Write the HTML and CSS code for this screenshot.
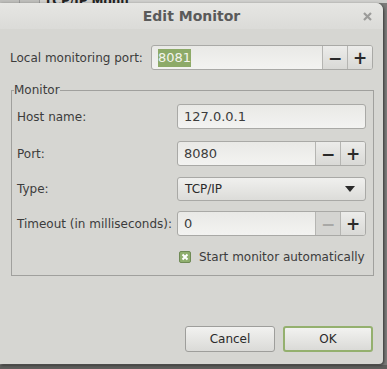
FILE: index.html
```html
<!DOCTYPE html>
<html lang="en">

<head>
  <meta charset="UTF-8">
  <title>Edit Monitor</title>
  <link rel="stylesheet" href="styles.css">
</head>

<body>
  <!-- parent window peeking out behind the dialog -->
  <div class="behind">
    <span class="behind-tab"></span>
    <span class="behind-tab"></span>
    <span class="behind-title">TCP/IP Monit</span>
  </div>

  <div class="dialog">
    <div class="titlebar">
      <span class="title">Edit Monitor</span>
      <svg class="close" width="9" height="9" viewBox="0 0 9 9">
        <path d="M1 1 L8 8 M8 1 L1 8" stroke="#9c9c9a" stroke-width="2.2" />
      </svg>
    </div>

    <div class="content">
      <div class="row top-row">
        <label class="label">Local monitoring port:</label>
        <div class="spin wide">
          <span class="spin-text"><span class="selected">8081</span></span>
          <span class="spin-btn">&minus;</span>
          <span class="spin-btn">+</span>
        </div>
      </div>

      <fieldset class="frame">
        <legend>Monitor</legend>

        <div class="row host-row">
          <label class="label">Host name:</label>
          <div class="entry">127.0.0.1</div>
        </div>

        <div class="row">
          <label class="label">Port:</label>
          <div class="spin">
            <span class="spin-text">8080</span>
            <span class="spin-btn">&minus;</span>
            <span class="spin-btn">+</span>
          </div>
        </div>

        <div class="row">
          <label class="label">Type:</label>
          <div class="combo">
            <span>TCP/IP</span>
            <span class="arrow"></span>
          </div>
        </div>

        <div class="row">
          <label class="label">Timeout (in milliseconds):</label>
          <div class="spin">
            <span class="spin-text">0</span>
            <span class="spin-btn disabled">&minus;</span>
            <span class="spin-btn">+</span>
          </div>
        </div>

        <div class="check-row">
          <span class="check">
            <svg width="8" height="8" viewBox="0 0 8 8">
              <path d="M1.5 1.5 L6.5 6.5 M6.5 1.5 L1.5 6.5" stroke="#fff" stroke-width="2" />
            </svg>
          </span>
          <span>Start monitor automatically</span>
        </div>
      </fieldset>

      <div class="buttons">
        <button class="btn">Cancel</button>
        <button class="btn ok">OK</button>
      </div>
    </div>
  </div>

  <div class="below"></div>
</body>

</html>
```

FILE: styles.css
```css
html,
body {
  margin: 0;
  padding: 0;
}

body {
  width: 387px;
  height: 369px;
  overflow: hidden;
  background: #7c7c7a;
  font-family: "DejaVu Sans", "Noto Sans", sans-serif;
  font-size: 12px;
  color: #3c3c3c;
  position: relative;
}

/* 后面那个窗口,只露出一条 */
.behind {
  height: 3px;
  background: #cfcfcc;
  display: flex;
  overflow: hidden;
  font-weight: bold;
  font-size: 12px;
  line-height: 3px;
  color: #222;
}

.behind-tab {
  width: 19px;
  border-right: 1px solid #999;
  background: #bdbdba;
}

.behind-title {
  margin-left: 4px;
  white-space: nowrap;
}

.dialog {
  width: 383px;
  height: 361px;
  background: #d6d6d2;
  border-radius: 0 7px 4px 0;
  box-shadow: 1px 1px 3px rgba(0, 0, 0, 0.6);
  position: relative;
  z-index: 1;
}

.titlebar {
  height: 26px;
  background: linear-gradient(#e6e6e3, #dbdbd8);
  border-radius: 0 7px 0 0;
  display: flex;
  align-items: center;
  justify-content: center;
  position: relative;
}

.title {
  font-weight: bold;
  font-size: 14px;
  color: #5a5a5a;
}

.close {
  position: absolute;
  right: 11px;
  top: 9px;
}

.content {
  padding: 16px 10px 0 10px;
}

.row {
  display: flex;
  align-items: center;
  height: 25px;
}

.top-row {
  margin-bottom: 14px;
}

.label {
  width: 141px;
  white-space: nowrap;
}

.frame .label {
  width: 160px;
}

/* 输入框 */
.entry,
.spin,
.combo {
  height: 25px;
  box-sizing: border-box;
  border: 1px solid #a9a9a6;
  border-radius: 3px;
  background: linear-gradient(#e9e9e6, #f3f3f1);
  flex: 1;
  display: flex;
  align-items: center;
}

.entry {
  padding-left: 6px;
  font-size: 13px;
}

.spin-text {
  flex: 1;
  padding-left: 6px;
  font-size: 13px;
}

.selected {
  background: #8daa68;
  color: #f4f4ee;
  padding: 1px 0 2px;
}

.spin-btn {
  width: 24px;
  height: 100%;
  border-left: 1px solid #b5b5b2;
  background: linear-gradient(#ececea, #d9d9d6);
  display: flex;
  align-items: center;
  justify-content: center;
  font-size: 17px;
  font-weight: bold;
  color: #2a2a2a;
}

.spin-btn:last-child {
  border-radius: 0 2px 2px 0;
}

.spin-btn.disabled {
  color: #a8a8a6;
  background: #d4d4d1;
}

.combo {
  height: 24px;
  justify-content: space-between;
  padding: 0 10px 0 7px;
  background: linear-gradient(#f0f0ee, #dcdcd9);
  color: #2a2a2a;
  font-size: 12px;
}

.arrow {
  width: 0;
  height: 0;
  border-left: 5px solid transparent;
  border-right: 5px solid transparent;
  border-top: 6px solid #2a2a2a;
}

/* Monitor 边框 */
.frame {
  min-width: 0;
  margin: 0 -1px 0 1px;
  border: 1px solid #a0a09d;
  padding: 7px 7px 11px 5px;
  display: flex;
  flex-direction: column;
  gap: 10px;
}

.frame legend {
  padding: 0;
  margin-left: -3px;
  font-size: 12px;
  color: #3c3c3c;
  line-height: 13px;
}

.host-row {
  margin-bottom: 2px;
}

.check-row {
  display: flex;
  align-items: center;
  padding-left: 162px;
  gap: 8px;
  height: 14px;
  margin-top: 4px;
  white-space: nowrap;
}

.check {
  width: 12px;
  height: 12px;
  box-sizing: border-box;
  border: 1px solid #6f8a55;
  border-radius: 2px;
  background: #8fae6e;
  display: flex;
  align-items: center;
  justify-content: center;
}

.buttons {
  display: flex;
  justify-content: flex-end;
  gap: 8px;
  margin-top: 50px;
}

.btn {
  width: 90px;
  height: 26px;
  border: 1px solid #9e9e9b;
  border-radius: 3px;
  background: linear-gradient(#f2f2f0, #dadad7);
  font-family: "DejaVu Sans", "Noto Sans", sans-serif;
  font-size: 12px;
  color: #2a2a2a;
  padding: 0;
}

.btn.ok {
  border: 2px solid #94b06e;
}

.below {
  position: absolute;
  left: 0;
  right: 0;
  bottom: 0;
  height: 4px;
  background: #5e5e5c;
}
```
